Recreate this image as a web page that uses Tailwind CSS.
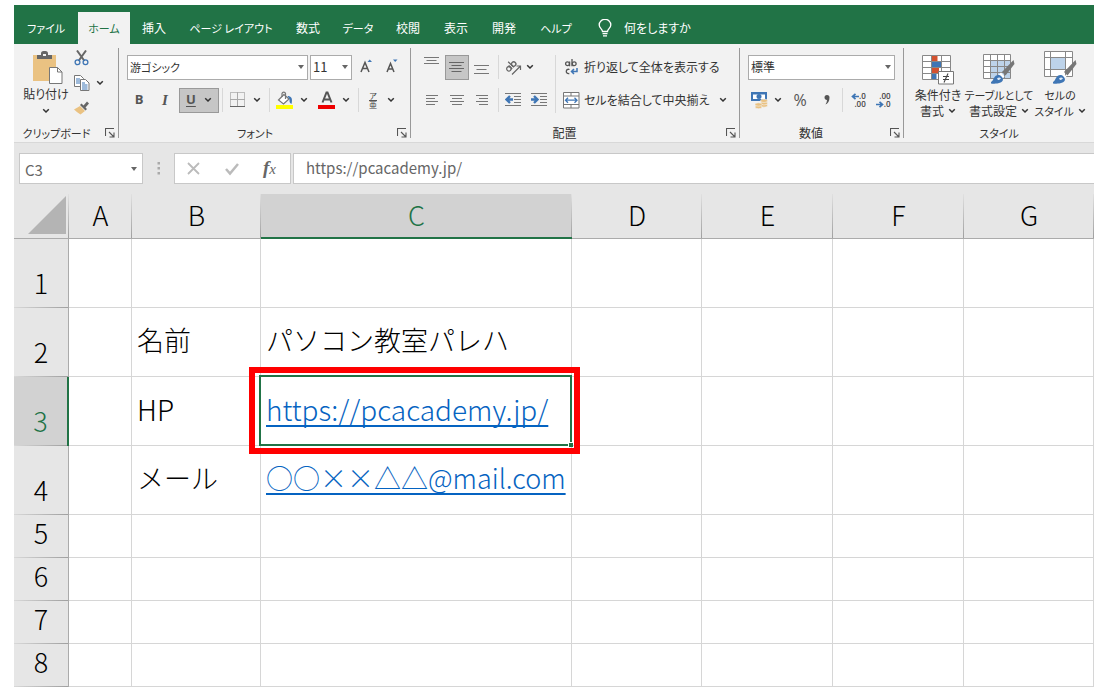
<!DOCTYPE html>
<html lang="ja">
<head>
<meta charset="utf-8">
<meta name="viewport" content="width=device-width, initial-scale=1">
<title>C3 - https://pcacademy.jp/</title>
<script src="https://cdn.jsdelivr.net/npm/@tailwindcss/browser@4"></script>
</head>
<body class="bg-white font-['Noto_Sans_CJK_JP',sans-serif] text-[#333]">
<svg class="hidden" aria-hidden="true">
  <defs>
    <symbol id="chev" viewBox="0 0 8 6"><path d="M1.2 1.2 4 4l2.800-2.800" fill="none" stroke="#333" stroke-width="1.500"/></symbol>
    <symbol id="caret" viewBox="0 0 6 4"><path d="M0 0h6L3 4z" fill="#666"/></symbol>
    <symbol id="launch" viewBox="0 0 10 10"><path d="M.5 8V.5H9M4 4l4.500 4.500M9 4.500V9H4.500" fill="none" stroke="#555" stroke-width="1.100"/></symbol>
    <symbol id="brush" viewBox="0 0 24 24"><path d="M22.500 0 11 12l3.500 3.500L23.500 4z" fill="#777"/><path d="M10 12.500 7.500 15l3.500 3.500 2.500-2z" fill="#fff"/><path d="M-2 23c3-1 4-3 5-5 1.500-3 5-4 7.500-1.500s1.500 5-1 6c-3.500 1.500-8 1.500-11.500.500z" fill="#3f76b5"/><path d="M6 18.500c1.500-1.500 3-1.500 4 0-1 .5-2 2-3 1.500z" fill="#dce8f5"/></symbol>
  </defs>
</svg>

<div class="mx-[14px] mt-[5px] overflow-hidden">
  <!-- Ribbon tabs -->
  <nav class="flex h-[39px] items-end bg-[#217346] text-[12px] text-white [font-feature-settings:'palt']" aria-label="リボン タブ">
    <button class="h-8 w-16 shrink-0 text-[11px]">ファイル</button>
    <button class="h-8 w-[52px] shrink-0 bg-[#f2f2f2] text-[11px] text-[#217346]">ホーム</button>
    <button class="h-8 w-12 shrink-0">挿入</button>
    <button class="h-8 w-[106px] shrink-0 text-[11px]">ページ レイアウト</button>
    <button class="h-8 w-12 shrink-0">数式</button>
    <button class="h-8 w-[52px] shrink-0 text-[11px]">データ</button>
    <button class="h-8 w-12 shrink-0">校閲</button>
    <button class="h-8 w-12 shrink-0">表示</button>
    <button class="h-8 w-12 shrink-0">開発</button>
    <button class="h-8 w-14 shrink-0 text-[11px]">ヘルプ</button>
    <button class="ml-[14px] flex h-8 shrink-0 items-center gap-3">
      <svg class="h-[18px] w-[14px]" viewBox="0 0 14 18" fill="none" stroke="#fff" stroke-width="1.300"><path d="M4.500 12.500C4.500 10 1.200 9 1.200 5.900a5.500 5.300 0 0 1 11.600 0C12.800 9 9.500 10 9.500 12.500zM4.500 14.700h5M5 16.900h4"/></svg>
      何をしますか
    </button>
  </nav>

  <!-- Ribbon -->
  <div class="flex h-[98px] bg-[#f2f2f2] text-[12px] [font-feature-settings:'palt']">
    <!-- Clipboard -->
    <section class="flex w-[104px] shrink-0 flex-col" aria-label="クリップボード">
      <div class="flex h-[76px] pl-2">
        <button class="flex w-12 flex-col items-center pt-[7px] whitespace-nowrap">
          <svg class="ml-1 h-[33px] w-[30px] shrink-0" viewBox="0 0 30 33"><path d="M0 4h23v26H0z" fill="#eac282"/><path d="M4 8V4h4V2.500Q8 0 10.500 0h2Q15 0 15 2.500V4h4v4z" fill="#666"/><path d="M10 3h3v2h-3z" fill="#f2f2f2"/><path d="M16.500 16.500h8l4.500 4.500v11.500H16.500z" fill="#fff" stroke="#777"/><path d="M24.500 16.500V21H29" fill="none" stroke="#777"/></svg>
          <span class="leading-5">貼り付け</span>
          <svg class="mt-1 h-1.5 w-2 shrink-0"><use href="#chev"/></svg>
        </button>
        <div class="flex flex-col gap-[9px] pt-[6px] pl-1">
          <button aria-label="切り取り" class="block h-4 w-4"><svg class="h-4 w-4" viewBox="0 0 16 16" fill="none"><path d="M3 .5 10.500 11M12 .5 4.500 11" stroke="#666" stroke-width="2"/><circle cx="3.500" cy="12.300" r="2.400" stroke="#3f76b5" stroke-width="1.300"/><circle cx="11.500" cy="12.300" r="2.400" stroke="#3f76b5" stroke-width="1.300"/></svg></button>
          <button aria-label="コピー" class="flex items-center gap-1.5"><svg class="h-4 w-4" viewBox="0 0 16 16"><path d="M.5.500h6l3 3v8h-9z" fill="#fff" stroke="#777"/><path d="M2 4h4M2 6h4M2 8h4" stroke="#3f76b5"/><path d="M6.500 4.500h5l3.500 3.500v7.500H6.500z" fill="#fff" stroke="#777"/><path d="M8 8h3M8 10h5.500M8 12h5.500M8 14h5.500" stroke="#3f76b5"/></svg><svg class="h-1.5 w-2"><use href="#chev"/></svg></button>
          <button aria-label="書式のコピー/貼り付け" class="block h-4 w-4"><svg class="h-4 w-4" viewBox="0 0 16 16"><path d="M6 6 0 9.500Q2.500 12 6.500 14.500L11 11z" fill="#eac282"/><path d="m6 5 5.500 5.500 1.500-1.500L11.500 7.500 15 3.500 13 1.500 9.500 5.500 7.500 3.500z" fill="#666"/></svg></button>
        </div>
      </div>
      <div class="flex h-[22px] items-center pt-1"><span class="flex-1 pr-1.5 text-center text-[11px]">クリップボード</span><button aria-label="クリップボードの設定" class="mr-[3px]"><svg class="h-2.5 w-2.5"><use href="#launch"/></svg></button></div>
    </section>
    <div class="my-1 w-px shrink-0 bg-[#999]"></div>

    <!-- Font -->
    <section class="flex w-[291px] shrink-0 flex-col" aria-label="フォント">
      <div class="flex h-[76px] flex-col gap-[9px] pt-[11px] pl-2">
        <div class="flex h-6 items-center">
          <div class="relative h-[25px] w-[181px]"><select aria-label="フォント名" class="h-full w-full appearance-none border border-[#ababab] bg-white pl-0.5 text-[11px]"><option>游ゴシック</option></select><svg class="pointer-events-none absolute top-2.5 right-1 h-1 w-1.5"><use href="#caret"/></svg></div>
          <div class="relative ml-0.5 h-[25px] w-[42px]"><select aria-label="フォント サイズ" class="h-full w-full appearance-none border border-[#ababab] bg-white pl-0.5 text-[13px]"><option>11</option></select><svg class="pointer-events-none absolute top-2.5 right-1 h-1 w-1.5"><use href="#caret"/></svg></div>
          <button aria-label="フォント サイズの拡大" class="ml-2"><svg class="h-4 w-4" viewBox="0 0 16 16"><path d="m1 13 4-9.500L9 13M2.500 9.500h5" fill="none" stroke="#555" stroke-width="1.500"/><path d="M7.500 3 9.700.5 12 3z" fill="#3f76b5"/></svg></button>
          <button aria-label="フォント サイズの縮小" class="ml-2.5"><svg class="h-4 w-4" viewBox="0 0 16 16"><path d="m1 13 3.500-8.500L8 13M2.500 10h4.500" fill="none" stroke="#555" stroke-width="1.500"/><path d="M7 .5h4.500L9.200 3z" fill="#3f76b5"/></svg></button>
        </div>
        <div class="flex h-6 items-center">
          <button aria-label="太字" class="w-6 font-['Open_Sans',sans-serif] text-[13px] font-bold text-[#555]">B</button>
          <button aria-label="斜体" class="w-7 font-['Liberation_Serif',serif] text-[15px] font-bold text-[#555] italic">I</button>
          <button aria-label="下線" class="flex h-[25px] w-10 items-center justify-between border border-[#999] bg-[#c6c6c6] px-1.5 font-['Open_Sans',sans-serif] text-[13px] font-bold text-[#555]"><span class="underline underline-offset-2">U</span><svg class="h-1.5 w-2"><use href="#chev"/></svg></button>
          <span class="ml-[3px] h-6 w-px bg-[#d8d8d8]"></span>
          <button aria-label="罫線" class="ml-[7px] flex items-center gap-[7px]"><svg class="h-4 w-4" viewBox="0 0 16 16" fill="none" stroke="#888"><path d="M.5.500h14v14H.500z" stroke-dasharray="1 1"/><path d="M7.500 0v14M0 7.500h15" stroke="#aaa"/><path d="M0 14.500h15" stroke="#666"/></svg><svg class="h-1.5 w-2"><use href="#chev"/></svg></button>
          <span class="ml-2 h-6 w-px bg-[#d8d8d8]"></span>
          <button aria-label="塗りつぶしの色" class="ml-1.5 flex items-center gap-1.5"><svg class="h-[18px] w-[18px]" viewBox="0 0 18 18"><path d="M8 3.500 2.500 9l5 4L13 8z" fill="#fff" stroke="#777" stroke-width="1.200"/><path d="M6 6V2.500a1.800 1.800 0 0 1 3.500 0V8" fill="none" stroke="#777" stroke-width="1.200"/><path d="M11.500 5c3.500 0 5.500 2 4 8-1.700-1-2.300-2.500-1.900-4.500z" fill="#3f76b5"/><path d="M0 14h17v4H0z" fill="#ff0"/></svg><svg class="h-1.5 w-2"><use href="#chev"/></svg></button>
          <button aria-label="フォントの色" class="ml-2.5 flex items-center gap-1.5"><svg class="h-[18px] w-[18px]" viewBox="0 0 18 18"><path d="m4.500 11.500 4-10h1l4 10M6 8.500h6" fill="none" stroke="#555" stroke-width="2"/><path d="M0 14h17v4H0z" fill="#e00"/></svg><svg class="h-1.5 w-2"><use href="#chev"/></svg></button>
          <span class="ml-2 h-6 w-px bg-[#d8d8d8]"></span>
          <button aria-label="ふりがな" class="ml-2 flex items-center gap-2"><span class="flex w-3 flex-col items-center text-[8px] leading-[9px] text-[#444]"><span>ア</span><span class="border-t border-[#555] leading-[8px]">亜</span></span><svg class="h-1.5 w-2"><use href="#chev"/></svg></button>
        </div>
      </div>
      <div class="flex h-[22px] items-center pt-1"><span class="flex-1 pr-1.5 text-center text-[11px]">フォント</span><button aria-label="フォントの設定" class="mr-[3px]"><svg class="h-2.5 w-2.5"><use href="#launch"/></svg></button></div>
    </section>
    <div class="my-1 w-px shrink-0 bg-[#999]"></div>

    <!-- Alignment -->
    <section class="flex w-[328px] shrink-0 flex-col" aria-label="配置">
      <div class="flex h-[76px] pt-[11px] pl-2">
        <div class="flex w-[136px] flex-col gap-[9px]">
          <div class="flex h-6 items-center">
            <button aria-label="上揃え" class="flex w-[26px] justify-center pb-3"><svg class="h-2 w-4" viewBox="0 0 16 8" stroke="#777"><path d="M0 .5h15M2.500 3.500h10M0 6.500h15"/></svg></button>
            <button aria-label="上下中央揃え" class="flex h-[25px] w-6 items-center justify-center border border-[#999] bg-[#c6c6c6]"><svg class="h-3 w-4 shrink-0" viewBox="0 0 16 12" stroke="#666"><path d="M0 1.500h15M2.500 4.500h10M0 7.500h15M2.500 10.500h10"/></svg></button>
            <button aria-label="下揃え" class="flex w-[26px] justify-center pt-1"><svg class="h-2.5 w-4" viewBox="0 0 16 10" stroke="#777"><path d="M0 1.500h15M2.500 5.500h10M0 9.500h15"/></svg></button>
            <span class="ml-[3px] h-6 w-px bg-[#d8d8d8]"></span>
            <button aria-label="方向" class="ml-1.5 flex items-center gap-1"><svg class="h-4 w-[17px]" viewBox="0 0 17 16"><g transform="rotate(-45 6 7)" fill="none" stroke="#666" stroke-width="1.300"><circle cx="2.500" cy="7.500" r="2.200"/><path d="M4.700 5v5M7 2v8"/><circle cx="9.300" cy="7.500" r="2.200"/></g><path d="M7 15.500 15.500 7M11.500 7H15.500v4" fill="none" stroke="#666" stroke-width="1.200"/></svg><svg class="h-1.5 w-2"><use href="#chev"/></svg></button>
          </div>
          <div class="flex h-6 items-center">
            <button aria-label="左揃え" class="flex w-[26px] justify-center"><svg class="h-3 w-3" viewBox="0 0 12 12" stroke="#777"><path d="M0 1.500h12M0 4.500h9M0 7.500h12M0 10.500h9"/></svg></button>
            <button aria-label="中央揃え" class="flex w-6 justify-center"><svg class="h-3 w-3.5" viewBox="0 0 14 12" stroke="#777"><path d="M0 1.500h14M2 4.500h10M0 7.500h14M2 10.500h10"/></svg></button>
            <button aria-label="右揃え" class="flex w-[26px] justify-center"><svg class="h-3 w-3" viewBox="0 0 12 12" stroke="#777"><path d="M0 1.500h12M3 4.500h9M0 7.500h12M3 10.500h9"/></svg></button>
            <span class="ml-[3px] h-6 w-px bg-[#d8d8d8]"></span>
            <button aria-label="インデントを減らす" class="ml-1.5"><svg class="h-4 w-4" viewBox="0 0 16 16"><path d="M0 1.500h16M9 4.500h7M9 7.500h7M9 10.500h7M0 13.500h16" stroke="#777"/><path d="M8 7.500H2M5 4 1.500 7.500 5 11" fill="none" stroke="#3f76b5" stroke-width="2.400"/></svg></button>
            <button aria-label="インデントを増やす" class="ml-2.5"><svg class="h-4 w-4" viewBox="0 0 16 16"><path d="M0 1.500h16M9 4.500h7M9 7.500h7M9 10.500h7M0 13.500h16" stroke="#777"/><path d="M0 7.500h6M3 4l3.500 3.500L3 11" fill="none" stroke="#3f76b5" stroke-width="2.400"/></svg></button>
          </div>
        </div>
        <span class="h-[58px] w-px bg-[#d8d8d8]"></span>
        <div class="flex flex-col gap-[9px] pl-[7px] whitespace-nowrap">
          <button class="flex h-6 items-center gap-1"><svg class="h-4 w-[17px]" viewBox="0 0 17 16" fill="none" stroke="#555" stroke-width="1.300"><circle cx="4.500" cy="4.800" r="1.900"/><path d="M6.600 2.500v4.800M9 0v7.300"/><circle cx="11.200" cy="4.800" r="1.900"/><path d="M6.500 10.500c-4-1.500-4.500 5-.2 4"/><path d="M14 9v3.500H9M11 10l-2.500 2.500L11 15" stroke="#3f76b5" stroke-width="1.500"/></svg>折り返して全体を表示する</button>
          <button class="flex h-6 items-center gap-1"><svg class="h-[17px] w-[17px]" viewBox="0 0 17 17"><path d="M.5.500h15.500v15.500H.500zM.500 4h15.500M.500 12.500h15.500M8 0v4M8 12.500V16" fill="#fff" stroke="#777"/><path d="M2.500 8.200h11.500M5 5.700 2.500 8.200 5 10.700M11.500 5.700 14 8.200l-2.500 2.500" fill="none" stroke="#3f76b5" stroke-width="1.300"/></svg>セルを結合して中央揃え<svg class="ml-1.5 h-1.5 w-2"><use href="#chev"/></svg></button>
        </div>
      </div>
      <div class="flex h-[22px] items-center pt-1"><span class="flex-1 pr-2 text-center">配置</span><button aria-label="配置の設定" class="mr-[3px]"><svg class="h-2.5 w-2.5"><use href="#launch"/></svg></button></div>
    </section>
    <div class="my-1 w-px shrink-0 bg-[#999]"></div>

    <!-- Number -->
    <section class="flex w-[163px] shrink-0 flex-col" aria-label="数値">
      <div class="flex h-[76px] flex-col gap-[9px] px-2 pt-[11px]">
        <div class="flex h-6 items-center">
          <div class="relative h-[25px] w-full"><select aria-label="表示形式" class="h-full w-full appearance-none border border-[#ababab] bg-white pl-0.5"><option>標準</option></select><svg class="pointer-events-none absolute top-2.5 right-1 h-1 w-1.5"><use href="#caret"/></svg></div>
        </div>
        <div class="flex h-6 items-center pl-[3px]">
          <button aria-label="通貨表示形式" class="flex items-center gap-1.5"><svg class="h-[17px] w-[17px]" viewBox="0 0 17 17"><path d="M0 0h16v9H0z" fill="#3f76b5"/><path d="M2 2.500h12v4.500H2z" fill="#fff"/><circle cx="8" cy="4.500" r="2.500" fill="#3f76b5"/><g fill="#eac282" stroke="#f2f2f2" stroke-width=".6"><ellipse cx="13" cy="13.500" rx="3.500" ry="1.700"/><ellipse cx="13" cy="11.200" rx="3.500" ry="1.700"/><ellipse cx="13" cy="8.800" rx="3.500" ry="1.700"/><ellipse cx="7.500" cy="15" rx="3.500" ry="1.700"/><ellipse cx="7.500" cy="12.500" rx="3.500" ry="1.700"/></g></svg><svg class="h-1.5 w-2"><use href="#chev"/></svg></button>
          <button aria-label="パーセント スタイル" class="ml-2.5 w-4 text-center font-['Open_Sans',sans-serif] text-[16px] text-[#555]">%</button>
          <button aria-label="桁区切りスタイル" class="ml-4"><svg class="h-2.5 w-1.5" viewBox="0 0 6 10"><path d="M.5 2.500a2.400 2.400 0 0 1 5 0C5.500 6 4 8.500 1.500 9.500 2.500 8 3 6.500 3 5 1.500 5 .5 4 .5 2.500z" fill="#555"/></svg></button>
          <span class="ml-3 h-6 w-px bg-[#d8d8d8]"></span>
          <button aria-label="小数点以下の表示桁数を増やす" class="ml-2 flex flex-col items-end font-['Open_Sans',sans-serif] text-[8px] leading-[8px] font-semibold text-[#444]"><span class="flex items-center"><svg class="h-[7px] w-2" viewBox="0 0 8 7"><path d="M8 3.500H2M4.500.8 1.500 3.500l3 2.700" fill="none" stroke="#3f76b5" stroke-width="1.700"/></svg>.0</span><span>.00</span></button>
          <button aria-label="小数点以下の表示桁数を減らす" class="ml-2.5 flex flex-col items-end font-['Open_Sans',sans-serif] text-[8px] leading-[8px] font-semibold text-[#444]"><span>.00</span><span class="flex items-center"><svg class="h-[7px] w-2" viewBox="0 0 8 7"><path d="M0 3.500h6M3.500.8l3 2.700-3 2.700" fill="none" stroke="#3f76b5" stroke-width="1.700"/></svg>.0</span></button>
        </div>
      </div>
      <div class="flex h-[22px] items-center pt-1"><span class="flex-1 pr-2 text-center">数値</span><button aria-label="数値の設定" class="mr-[3px]"><svg class="h-2.5 w-2.5"><use href="#launch"/></svg></button></div>
    </section>
    <div class="my-1 w-px shrink-0 bg-[#999]"></div>

    <!-- Styles -->
    <section class="flex w-[190px] shrink-0 flex-col" aria-label="スタイル">
      <div class="flex h-[76px] pt-[7px] pl-[5px] leading-4 whitespace-nowrap">
        <button class="flex w-[58px] flex-col items-center">
          <svg class="mb-0.5 h-[34px] w-8 shrink-0" viewBox="0 0 32 34"><path d="M.5 4.500h28v24H.500z" fill="#fff"/><path d="M9.500 4.500h6v6h-6zM9.500 16.500H17v6H9.500z" fill="#d35230"/><path d="M9.500 10.500h9.500v6H9.500zM9.500 22.500h5v6h-5z" fill="#3f76b5"/><path d="M.5 4.500h28v24H.500zM.500 10.500h28M.500 16.500h28M.500 22.500h28M9.500 4.500v24M19.500 4.500v24" fill="none" stroke="#888"/><path d="M16.500 20.500h15v12.500h-15z" fill="#fff" stroke="#777"/><path d="M21 25.500h6M21 28.500h6M26 22.500l-4 9" stroke="#444" stroke-width="1.100"/></svg>
          <span>条件付き</span><span class="flex items-center gap-1">書式<svg class="h-1.5 w-2"><use href="#chev"/></svg></span>
        </button>
        <button class="flex w-16 flex-col items-center">
          <svg class="mb-0.5 h-[34px] w-8 shrink-0" viewBox="0 0 32 34"><path d="M.5 3.500h27v24H.500z" fill="#fff"/><path d="M7.500 9.500h20v18h-20z" fill="#bdd3ea"/><path d="M.5 3.500h27v24H.500zM.500 9.500h27M.500 15.500h27M.500 21.500h27M7.500 3.500v24M14.500 3.500v24M21.500 3.500v24" fill="none" stroke="#888"/><use href="#brush" x="8" y="9" width="24" height="24"/></svg>
          <span class="text-[11px]">テーブルとして</span><span class="flex items-center gap-1">書式設定<svg class="h-1.5 w-2"><use href="#chev"/></svg></span>
        </button>
        <button class="flex w-[58px] flex-col items-center">
          <svg class="mb-0.5 h-[34px] w-[33px] shrink-0" viewBox="0 0 33 34"><path d="M.5.500h28v25H.500z" fill="#fff"/><path d="M6.500 6.500h15v12h-15z" fill="#bdd3ea"/><path d="M.5.500h28v25H.500zM.500 6.500h28M.500 18.500h28M6.500.500v25M21.500.500v25" fill="none" stroke="#888"/><use href="#brush" x="9" y="9" width="24" height="24"/></svg>
          <span class="text-[11px]">セルの</span><span class="flex items-center gap-1 text-[11px]">スタイル<svg class="h-1.5 w-2"><use href="#chev"/></svg></span>
        </button>
      </div>
      <div class="flex h-[22px] items-center justify-center pt-1 text-[11px]">スタイル</div>
    </section>
  </div>

  <!-- Formula bar -->
  <div class="flex h-[52px] border-t border-[#d8d8d8] bg-[#e6e6e6] pt-2.5 pl-[5px] text-[#666]">
    <div class="relative h-[31px] w-[124px] shrink-0"><input aria-label="名前ボックス" value="C3" class="h-full w-full border border-[#c8c8c8] bg-white pt-0.5 pl-[5px] text-[15px]"><svg class="pointer-events-none absolute top-3.5 right-1.5 h-1 w-1.5"><use href="#caret"/></svg></div>
    <svg class="mt-2 ml-[14px] h-4 w-1 shrink-0" viewBox="0 0 4 16" fill="#aaa"><path d="M.5 1h2.500v2.500H.500zM.500 6h2.500v2.500H.500zM.500 11h2.500v2.500H.500z"/></svg>
    <div class="ml-[13px] flex h-[31px] w-[117px] shrink-0 items-center border border-[#c8c8c8] bg-white pl-3">
      <button aria-label="キャンセル"><svg class="h-3.5 w-3.5" viewBox="0 0 14 14"><path d="m1 1 11 11M12 1 1 12" stroke="#bbb" stroke-width="1.800"/></svg></button>
      <button aria-label="入力" class="ml-6"><svg class="h-3.5 w-3.5" viewBox="0 0 14 14"><path d="m1 7 4 4.500L13 2" fill="none" stroke="#bbb" stroke-width="2.500"/></svg></button>
      <button aria-label="関数の挿入" class="ml-6 font-['Liberation_Serif',serif] text-[19px] leading-5 font-bold italic">f<span class="text-[15px] font-normal">x</span></button>
    </div>
    <input aria-label="数式バー" value="https://pcacademy.jp/" class="ml-0.5 h-[31px] min-w-0 flex-1 border border-r-0 border-[#c8c8c8] bg-white pb-0.5 pl-3 text-[15px]">
  </div>

  <!-- Sheet -->
  <table class="w-full table-fixed border-separate border-spacing-0 text-left text-[27px] leading-[36px] font-light text-black">
    <colgroup><col class="w-[55px]"><col class="w-[63px]"><col class="w-[129px]"><col class="w-[311px]"><col class="w-[130px]"><col class="w-[131px]"><col class="w-[131px]"><col class="w-[130px]"></colgroup>
    <thead class="text-center [&_th]:border-b [&_th]:border-[#ababab] [&_th]:bg-[#e6e6e6] [&_th]:bg-linear-to-b [&_th]:from-[#e0e0e0] [&_th]:to-[#a0a0a0] [&_th]:bg-[length:1px_100%] [&_th]:bg-right [&_th]:bg-no-repeat [&_th]:p-0 [&_th]:pb-0.5 [&_th]:font-light">
      <tr class="h-[45px]">
        <th><svg class="ml-auto mr-[3px] h-[38px] w-[38px]" viewBox="0 0 38 38" role="img" aria-label="すべて選択"><path d="M38 0v38H0z" fill="#b4b4b4"/></svg></th>
        <th scope="col">A</th><th scope="col">B</th>
        <th scope="col" class="border-b-2! border-[#217346]! bg-[#d2d2d2]! text-[#217346]">C</th>
        <th scope="col">D</th><th scope="col">E</th><th scope="col">F</th><th scope="col">G</th>
      </tr>
    </thead>
    <tbody class="[&_td]:border-r [&_td]:border-b [&_td]:border-[#d6d6d6] [&_td]:p-0 [&_td]:pb-1 [&_td]:pl-[5px] [&_td]:whitespace-nowrap [&_th]:border-r [&_th]:border-[#ababab] [&_th]:bg-[#e6e6e6] [&_th]:bg-linear-to-r [&_th]:from-[#d8d8d8] [&_th]:to-[#a0a0a0] [&_th]:bg-[length:100%_1px] [&_th]:bg-bottom [&_th]:bg-no-repeat [&_th]:p-0 [&_th]:pb-[7px] [&_th]:text-center [&_th]:align-bottom [&_th]:font-light">
      <tr class="h-[69px]"><th scope="row">1</th><td></td><td></td><td></td><td></td><td></td><td></td><td></td></tr>
      <tr class="h-[69px]"><th scope="row">2</th><td></td><td>名前</td><td>パソコン教室パレハ</td><td></td><td></td><td></td><td></td></tr>
      <tr class="h-[69px]"><th scope="row" class="border-r-2! border-[#217346]! bg-[#d2d2d2]! text-[#217346]">3</th><td></td><td class="text-[28px]">HP</td>
        <td class="relative text-[28px]"><a href="https://pcacademy.jp/" class="text-[#0563c1] underline decoration-2 underline-offset-4 [text-decoration-skip-ink:none]">https://pcacademy.jp/</a>
          <div class="pointer-events-none absolute -top-0.5 -right-px -bottom-px -left-0.5 border-2 border-[#217346]"><span class="absolute -right-[3px] -bottom-[3px] h-[5px] w-[5px] border-t border-l border-white bg-[#217346]"></span></div>
          <div class="pointer-events-none absolute -top-2.5 -right-[9px] -bottom-[9px] -left-3 border-6 border-[#f00]"></div>
        </td><td></td><td></td><td></td><td></td></tr>
      <tr class="h-[69px]"><th scope="row">4</th><td></td><td>メール</td><td><a href="mailto:%E2%97%8B%E2%97%8B@mail.com" class="text-[#0563c1] underline decoration-2 underline-offset-4 [text-decoration-skip-ink:none]">○○××△△@mail.com</a></td><td></td><td></td><td></td><td></td></tr>
      <tr class="h-[43px]"><th scope="row">5</th><td></td><td></td><td></td><td></td><td></td><td></td><td></td></tr>
      <tr class="h-[43px]"><th scope="row">6</th><td></td><td></td><td></td><td></td><td></td><td></td><td></td></tr>
      <tr class="h-[43px]"><th scope="row">7</th><td></td><td></td><td></td><td></td><td></td><td></td><td></td></tr>
      <tr class="h-[43px]"><th scope="row">8</th><td></td><td></td><td></td><td></td><td></td><td></td><td></td></tr>
    </tbody>
  </table>
</div>
</body>
</html>
